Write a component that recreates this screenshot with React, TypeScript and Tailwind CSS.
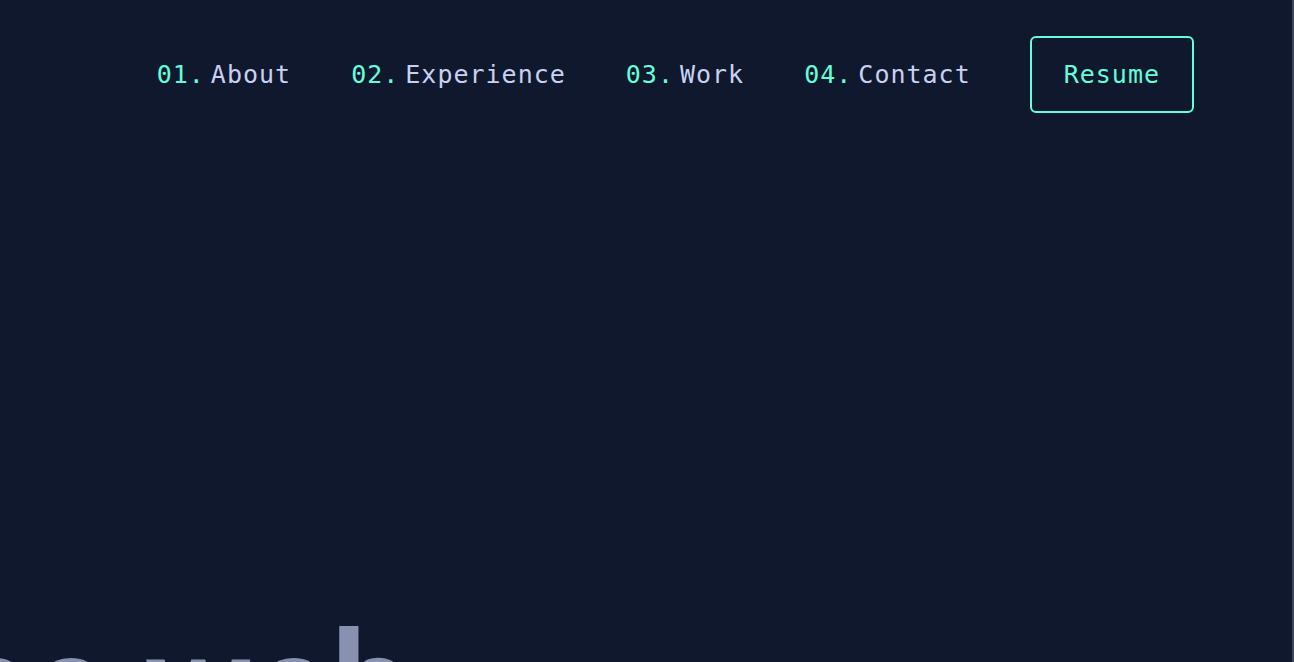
import React from "react";

const items = [
  { n: "01.", label: "About" },
  { n: "02.", label: "Experience" },
  { n: "03.", label: "Work" },
  { n: "04.", label: "Contact" },
];

export default function App() {
  return (
    <div className="h-[662px] w-full overflow-hidden bg-[#0f182c] border-r-2 border-[#3d4759] flex flex-col">
      <nav
        className="flex items-center justify-end pt-[36px] pr-[98px] gap-[60px] text-[25px] tracking-[1px]"
        style={{ fontFamily: '"DejaVu Sans Mono", "Liberation Mono", monospace' }}
      >
        {items.map((it) => (
          <a key={it.n} className="text-[#c9d1f3] whitespace-nowrap flex items-center">
            <span className="text-[#64ffda] mr-[6px]">{it.n}</span>
            <span>{it.label}</span>
          </a>
        ))}
        <button className="-ml-[1px] h-[77px] px-[32px] border-2 border-[#64ffda] rounded-[6px] text-[#64ffda] tracking-[1px]">
          Resume
        </button>
      </nav>
      <div className="mt-[501px] w-[454px] flex justify-end">
        <h1
          className="whitespace-nowrap text-[148px] leading-none font-semibold tracking-[-1px] text-[#8892b0]"
          style={{ fontFamily: 'Roboto, "Noto Sans", sans-serif' }}
        >
          I build things for the web.
        </h1>
      </div>
    </div>
  );
}
